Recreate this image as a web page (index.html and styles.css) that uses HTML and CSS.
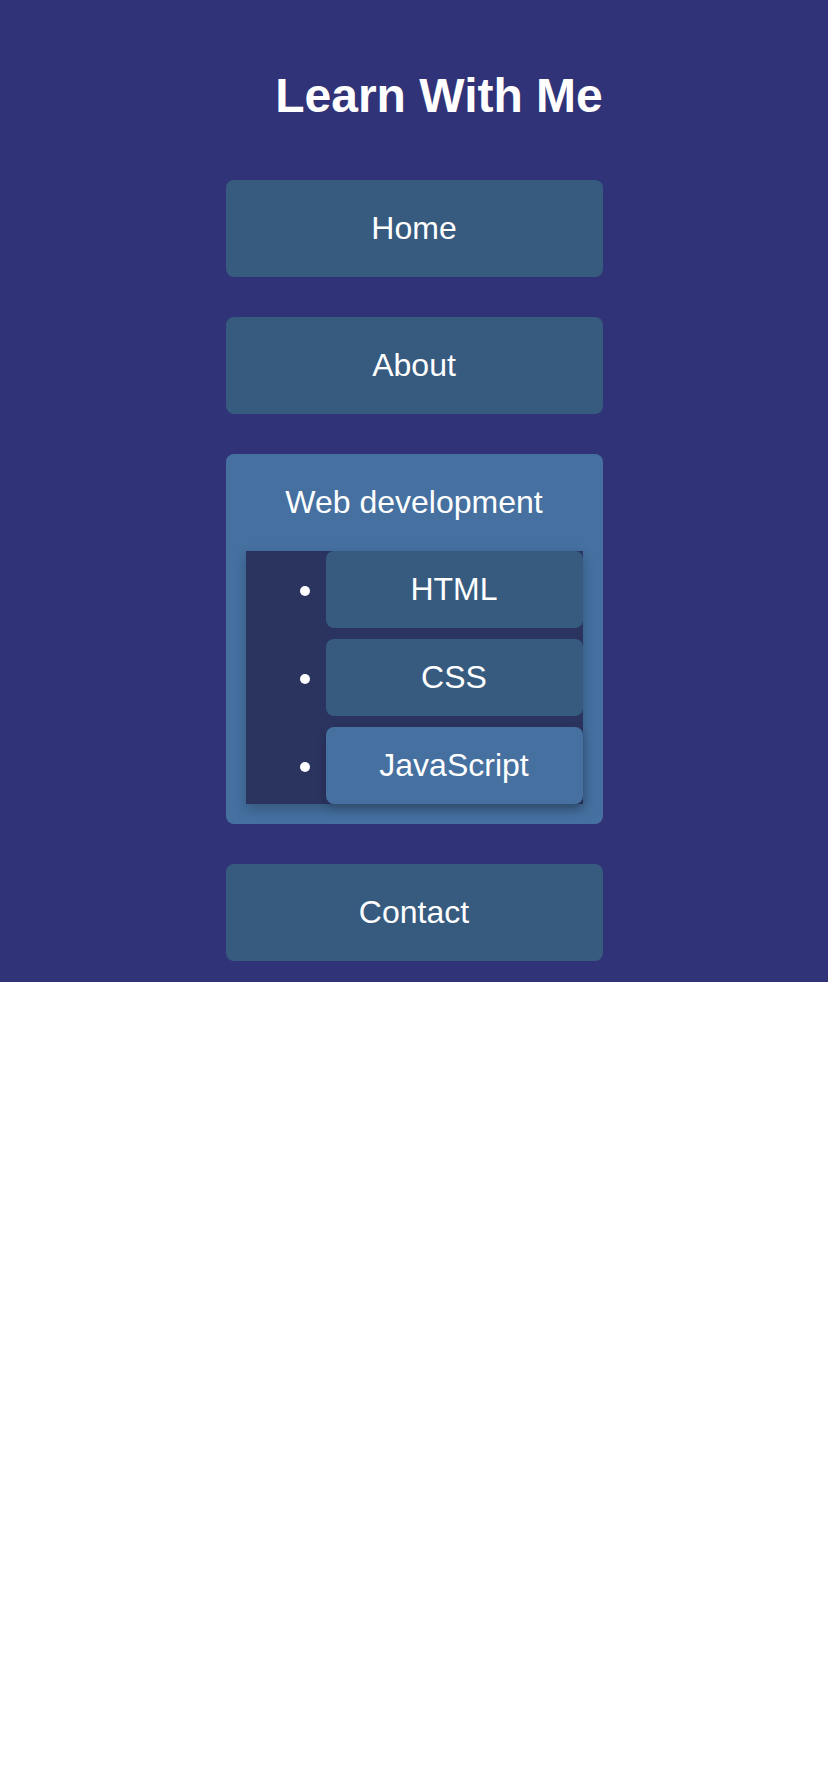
FILE: index.html
```html
<!DOCTYPE html>
<html lang="en">
<head>
<meta charset="utf-8">
<title>Learn With Me</title>
<link rel="stylesheet" href="styles.css">
</head>
<body>
<header class="site-header">
  <h1 class="title">Learn With Me</h1>
  <nav>
    <ul class="menu">
      <li class="menu-item"><a class="menu-link" href="#">Home</a></li>
      <li class="menu-item"><a class="menu-link" href="#">About</a></li>
      <li class="menu-item menu-item-open">
        <a class="menu-link" href="#">Web development</a>
        <ul class="submenu">
          <li class="submenu-item"><a class="submenu-link" href="#">HTML</a></li>
          <li class="submenu-item"><a class="submenu-link" href="#">CSS</a></li>
          <li class="submenu-item"><a class="submenu-link submenu-link-active" href="#">JavaScript</a></li>
        </ul>
      </li>
      <li class="menu-item"><a class="menu-link" href="#">Contact</a></li>
    </ul>
  </nav>
</header>
</body>
</html>
```
FILE: styles.css
```css
html, body {
  margin: 0;
  padding: 0;
  background: #ffffff;
}

body {
  font-family: "Liberation Sans", Arial, sans-serif;
  color: #ffffff;
}

.site-header {
  background: #303377;
  padding: 68px 0 21px;
}

.title {
  margin: 0 0 57px;
  padding-left: 50px;
  text-align: center;
  font-size: 48px;
  font-weight: bold;
  line-height: 55px;
}

.menu {
  list-style: none;
  margin: 0;
  padding: 0;
  display: flex;
  flex-direction: column;
  align-items: center;
  gap: 40px;
}

.menu-item {
  width: 377px;
  background: #375a7f;
  border-radius: 8px;
}

.menu-link {
  display: block;
  padding: 30px 0;
  text-align: center;
  font-size: 32px;
  line-height: 37px;
  color: #ffffff;
  text-decoration: none;
}

.menu-item-open {
  background: #4570a0;
  padding-bottom: 20px;
}

.submenu {
  margin: 0 20px;
  padding: 0 0 0 80px;
  background: #2b345f;
  list-style: disc;
  display: flex;
  flex-direction: column;
  gap: 11px;
  box-shadow: 0 5px 12px rgba(0, 0, 0, 0.22);
}

.submenu-item {
  display: list-item;
  font-size: 32px;
  line-height: 37px;
}

.submenu-link {
  display: block;
  padding: 20px 0;
  text-align: center;
  background: #375a7f;
  border-radius: 8px;
  color: #ffffff;
  text-decoration: none;
}

.submenu-link-active {
  background: #4570a0;
  box-shadow: 0 4px 10px rgba(0, 0, 0, 0.2);
}
```
